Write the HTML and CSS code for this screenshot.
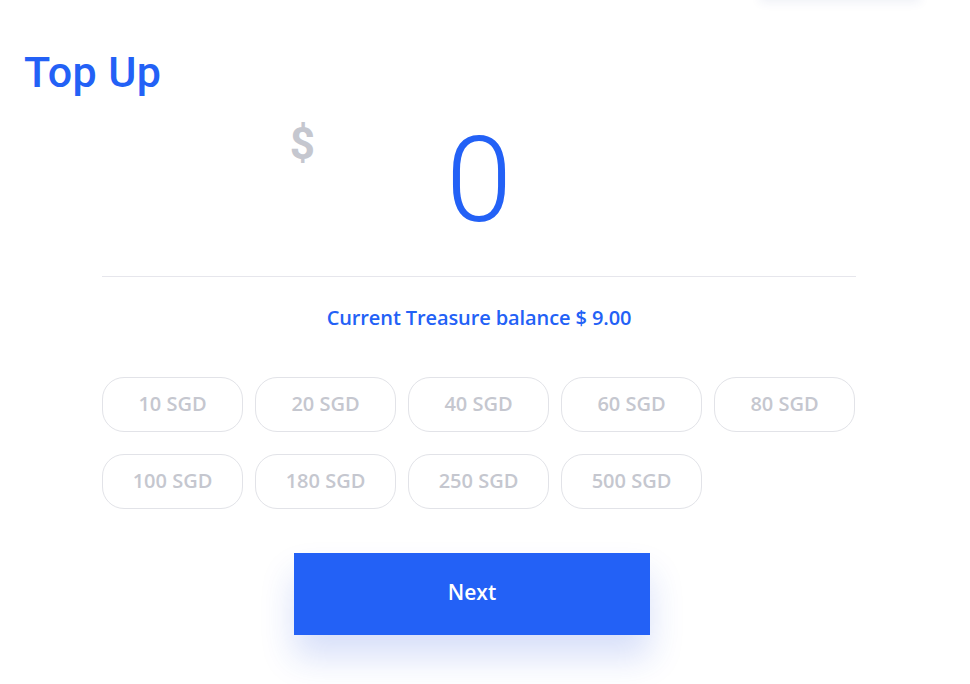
FILE: index.html
```html
<!DOCTYPE html>
<html lang="en">
<head>
<meta charset="utf-8">
<title>Top Up</title>
<link rel="stylesheet" href="styles.css">
</head>
<body>
<div class="menu-shadow"></div>
<main class="page">
  <h1 class="title">Top Up</h1>
  <section class="content">
    <div class="amount">
      <span class="currency">$</span>
      <span class="value">0</span>
      <span></span>
    </div>
    <hr class="divider">
    <p class="balance">Current Treasure balance $ 9.00</p>
    <div class="presets">
      <button class="preset">10 SGD</button>
      <button class="preset">20 SGD</button>
      <button class="preset">40 SGD</button>
      <button class="preset">60 SGD</button>
      <button class="preset">80 SGD</button>
      <button class="preset">100 SGD</button>
      <button class="preset">180 SGD</button>
      <button class="preset">250 SGD</button>
      <button class="preset">500 SGD</button>
    </div>
    <div class="actions">
      <button class="next">Next</button>
    </div>
  </section>
</main>
</body>
</html>
```

FILE: styles.css
```css
* { box-sizing: border-box; }
html, body { margin: 0; padding: 0; background: #ffffff; }
body {
  font-family: "Open Sans", "Noto Sans", "Liberation Sans", sans-serif;
  overflow: hidden;
  height: 684px;
}
.menu-shadow {
  position: absolute;
  top: -40px;
  left: 760px;
  width: 160px;
  height: 40px;
  background: #fff;
  box-shadow: 0 2px 10px rgba(40, 60, 140, 0.08);
}
.page {
  padding-top: 46px;
}
.title {
  margin: 0 0 0 24px;
  font-family: Roboto, "Liberation Sans", sans-serif;
  font-size: 43px;
  line-height: 52px;
  font-weight: 500;
  color: #2361f6;
  letter-spacing: 0.4px;
}
.content {
  margin-left: 102px;
  width: 754px;
}
.amount {
  display: grid;
  grid-template-columns: 1fr auto 1fr;
  align-items: start;
  height: 178px;
}
.currency {
  justify-self: end;
  margin-right: 131px;
  margin-top: 21px;
  font-family: Roboto, "Liberation Sans", sans-serif;
  font-size: 44px;
  line-height: 50px;
  font-weight: 700;
  color: #c5c7cf;
}
.value {
  margin-top: 24px;
  font-family: Roboto, "Liberation Sans", sans-serif;
  font-size: 119px;
  line-height: 118px;
  font-weight: 300;
  color: #2361f6;
}
.divider {
  margin: 0;
  border: 0;
  border-top: 1px solid #e6e6ec;
}
.balance {
  margin: 29px 0 0;
  text-align: center;
  font-size: 20px;
  line-height: 24px;
  font-weight: 600;
  color: #2361f6;
  letter-spacing: -0.1px;
}
.presets {
  margin-top: 47px;
  display: grid;
  grid-template-columns: repeat(5, 141px);
  column-gap: 12px;
  row-gap: 22px;
}
.preset {
  height: 55px;
  border: 1px solid #e2e3e8;
  border-radius: 22px;
  background: #fff;
  font-family: inherit;
  font-size: 20px;
  font-weight: 600;
  color: #c5c7cf;
  letter-spacing: 0;
  padding: 0 0 2px;
}
.actions {
  margin-top: 44px;
  padding-left: 192px;
}
.next {
  width: 356px;
  height: 82px;
  border: 0;
  border-radius: 0;
  background: #2361f6;
  color: #fff;
  font-family: inherit;
  font-size: 21px;
  font-weight: 600;
  padding: 0 0 5px;
  box-shadow: 0 22px 34px rgba(35, 80, 220, 0.18);
}
```
